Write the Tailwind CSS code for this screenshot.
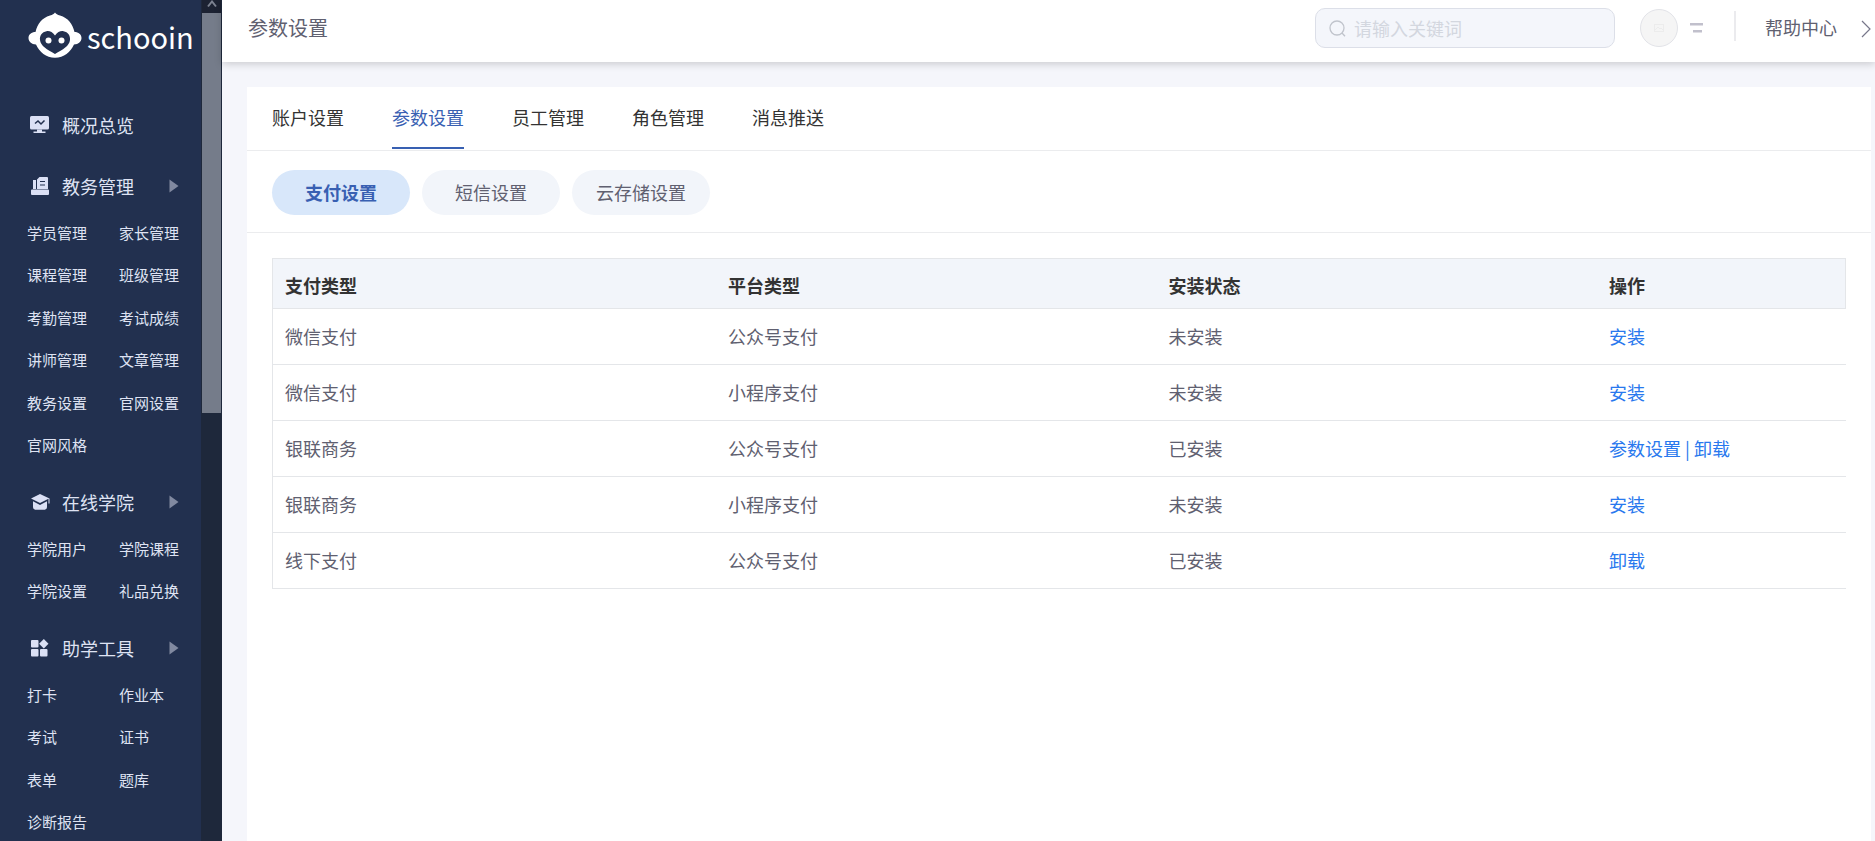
<!DOCTYPE html>
<html lang="zh-CN">
<head>
<meta charset="utf-8">
<meta name="viewport" content="width=device-width, initial-scale=1">
<title>参数设置</title>
<script src="https://cdn.jsdelivr.net/npm/@tailwindcss/browser@4"></script>
</head>
<body class="flex h-screen overflow-hidden bg-[#f5f6fb] font-['Noto_Sans_CJK_SC',sans-serif] text-lg text-[#606070]">

<aside class="flex w-[222px] shrink-0 bg-[#22304f] text-[#dfe3f3]">
  <div class="min-w-0 flex-1 overflow-hidden">
    <a href="#" class="flex h-[88px] items-start gap-[5px] pl-7 text-white">
      <svg class="mt-3 h-[46px] w-[54px] shrink-0" viewBox="0 0 54 46" aria-hidden="true">
        <path fill="#fff" d="M27 .5c1 1.600 2.500 2.200 5 3C40 6 44.500 11.500 46.500 20c4 0 7 2.500 7 6s-3 6.500-7.500 6.500C42.500 40 36 45.800 27 45.800S11.500 40 8 32.500C3.500 32.500.5 29.500.5 26s3-6 7-6C9.500 11.500 14 6 22 3.500c2.500-.8 4-1.400 5-3z"/>
        <path fill="#22304f" d="M27 23.500c2.500-3.500 5.500-4.800 8.500-4.300 4.500.7 7 4.300 6.500 8.800-.7 6-7 9.500-15 14-8-4.500-14.300-8-15-14-.5-4.500 2-8.100 6.500-8.800 3-.5 6 .8 8.500 4.300z"/>
        <circle cx="20.500" cy="28.500" r="3" fill="#fff"/><circle cx="33.500" cy="28.500" r="3" fill="#fff"/>
      </svg>
      <span class="mt-3 text-[29px] leading-[48px]">schooin</span>
    </a>
    <nav aria-label="主菜单">
      <a href="#" class="mt-3 flex h-[50px] items-center pl-[30px]">
        <svg class="mr-3 size-5" viewBox="0 0 20 20" fill="none" aria-hidden="true"><rect y="1" width="19" height="13.500" rx="1.500" fill="#dbe0f5"/><path d="M7 14.500h5v2h3.500V18h-12v-1.500H7z" fill="#dbe0f5"/><path d="M5 8.500 8 6l3 3 3.500-3.500" stroke="#22304f" stroke-width="1.500"/></svg>
        概况总览
      </a>
      <button type="button" class="mt-[11px] flex h-[50px] w-full items-center pl-[30px]">
        <svg class="mr-3 size-5" viewBox="0 0 20 20" aria-hidden="true"><path fill="#dbe0f5" d="M3 4h3v9H3zM7 3.500 9.500 1H17a1 1 0 0 1 1 1v11H7zM2 13.500h16a1 1 0 0 1 1 1V18a1 1 0 0 1-1 1H2a1 1 0 0 1-1-1v-3.500a1 1 0 0 1 1-1z"/><path stroke="#22304f" d="M10 5.500h5M10 9h5"/></svg>
        教务管理
        <svg class="ml-auto mr-[22px] h-[14px] w-[10px]" viewBox="0 0 10 14" aria-hidden="true"><path fill="#8189a0" d="M.5.5 9.500 7l-9 6.500z"/></svg>
      </button>
      <div class="grid h-[255px] grid-cols-[92px_1fr] grid-rows-6 items-center pl-[27px] text-[15px]">
        <a href="#">学员管理</a><a href="#">家长管理</a>
        <a href="#">课程管理</a><a href="#">班级管理</a>
        <a href="#">考勤管理</a><a href="#">考试成绩</a>
        <a href="#">讲师管理</a><a href="#">文章管理</a>
        <a href="#">教务设置</a><a href="#">官网设置</a>
        <a href="#">官网风格</a>
      </div>
      <button type="button" class="mt-[11px] flex h-[50px] w-full items-center pl-[30px]">
        <svg class="mr-3 size-5" viewBox="0 0 20 20" fill="#dbe0f5" aria-hidden="true"><path d="M10 2 1 6.500l9 4.500 8.500-4.300v4.800h1V6.500z"/><path d="M3 9.300 10 13l7-3.700V15c0 2-1.500 2.800-3 2.800H6c-1.500 0-3-.8-3-2.800z"/></svg>
        在线学院
        <svg class="ml-auto mr-[22px] h-[14px] w-[10px]" viewBox="0 0 10 14" aria-hidden="true"><path fill="#8189a0" d="M.5.5 9.500 7l-9 6.500z"/></svg>
      </button>
      <div class="grid h-[85px] grid-cols-[92px_1fr] grid-rows-2 items-center pl-[27px] text-[15px]">
        <a href="#">学院用户</a><a href="#">学院课程</a>
        <a href="#">学院设置</a><a href="#">礼品兑换</a>
      </div>
      <button type="button" class="mt-[11px] flex h-[50px] w-full items-center pl-[30px]">
        <svg class="mr-3 size-5" viewBox="0 0 20 20" fill="#dbe0f5" aria-hidden="true"><rect x="1" y="2" width="7.500" height="7.500" rx="1"/><rect x="1" y="11" width="7.500" height="7.500" rx="1"/><rect x="10" y="11" width="7.500" height="7.500" rx="1"/><path d="M13.800 1 18.500 5.700l-4.700 4.700-4.700-4.700z"/></svg>
        助学工具
        <svg class="ml-auto mr-[22px] h-[14px] w-[10px]" viewBox="0 0 10 14" aria-hidden="true"><path fill="#8189a0" d="M.5.5 9.500 7l-9 6.500z"/></svg>
      </button>
      <div class="grid h-[170px] grid-cols-[92px_1fr] grid-rows-4 items-center pl-[27px] text-[15px]">
        <a href="#">打卡</a><a href="#">作业本</a>
        <a href="#">考试</a><a href="#">证书</a>
        <a href="#">表单</a><a href="#">题库</a>
        <a href="#">诊断报告</a>
      </div>
    </nav>
  </div>
  <div class="flex w-[21px] shrink-0 flex-col bg-[#1e283b] px-px" aria-hidden="true">
    <div class="flex h-[13px] justify-center bg-[#1c2232]">
      <svg class="h-2 w-[10px]" viewBox="0 0 10 8" fill="none" stroke="#7c8290" stroke-width="2"><path d="m1 6.500 4-5 4 5"/></svg>
    </div>
    <div class="h-[400px] bg-[#757c8a]"></div>
  </div>
</aside>

<div class="flex min-w-0 flex-1 flex-col">
  <header class="z-10 flex h-[62px] shrink-0 items-start bg-white pl-[26px] shadow-[0_2px_8px_rgba(0,0,0,0.18)]">
    <h1 class="mt-[14px] text-xl leading-7">参数设置</h1>
    <label class="ml-auto mt-2 flex h-10 w-[300px] items-center gap-2 rounded-[10px] border border-[#dcdfe8] bg-[#f4f6fb] pl-[13px]">
      <svg class="size-[17px] shrink-0" viewBox="0 0 17 17" fill="none" stroke="#c0c4cc" stroke-width="1.300" aria-hidden="true"><circle cx="8" cy="8" r="7"/><path d="m13 13 3 3.300"/></svg>
      <input type="search" aria-label="搜索" placeholder="请输入关键词" class="w-full min-w-0 bg-transparent outline-none placeholder:text-[#d3d7df]">
    </label>
    <button type="button" aria-label="用户菜单" class="ml-[25px] mt-[9px] flex items-center gap-3">
      <span class="flex size-[38px] items-center justify-center rounded-full border border-[#e2e3e8] bg-[#f5f5f5]">
        <svg class="h-2 w-[10px]" viewBox="0 0 10 8" fill="none" stroke="#ececec"><rect x=".5" y=".5" width="9" height="7"/><path d="m1 6 3-3 2 2 1-1 2 2"/></svg>
      </span>
      <svg class="h-[10px] w-[13px]" viewBox="0 0 13 10" fill="#c1c0cc"><path d="M0 0h13v2.500H0zM3 7h9v2.500H3z"/></svg>
    </button>
    <span class="ml-[31px] mt-[11px] h-[30px] w-[2px] bg-[#ebebee]"></span>
    <a href="#" class="ml-[29px] mt-[13px] leading-7">帮助中心</a>
    <button type="button" aria-label="更多" class="ml-6 mr-1 mt-5">
      <svg class="h-[18px] w-[10px]" viewBox="0 0 10 18" fill="none" stroke="#77778a" stroke-width="1.200"><path d="m1 1 8 8-8 8"/></svg>
    </button>
  </header>

  <main class="ml-[25px] mr-1 mt-[25px] flex-1 bg-white">
    <nav aria-label="设置" class="flex h-16 gap-12 border-b border-[#ebecee] pl-[25px] text-[#333]">
      <a href="#" class="h-[62px] leading-[60px]">账户设置</a>
      <a href="#" aria-current="page" class="h-[62px] border-b-2 border-[#3860b2] leading-[60px] text-[#3860b2]">参数设置</a>
      <a href="#" class="h-[62px] leading-[60px]">员工管理</a>
      <a href="#" class="h-[62px] leading-[60px]">角色管理</a>
      <a href="#" class="h-[62px] leading-[60px]">消息推送</a>
    </nav>
    <div class="flex h-[82px] gap-3 border-b border-[#ebecee] pl-[25px] pt-[19px]">
      <button type="button" class="h-[45px] w-[138px] rounded-full bg-[#d8e7fa] pb-0.5 font-bold text-[#3860b2]">支付设置</button>
      <button type="button" class="h-[45px] w-[138px] rounded-full bg-[#f2f5fa] pb-0.5">短信设置</button>
      <button type="button" class="h-[45px] w-[138px] rounded-full bg-[#f2f5fa] pb-0.5">云存储设置</button>
    </div>
    <div class="px-[25px] pt-[25px]">
      <table class="w-full table-fixed border-collapse text-left">
        <thead>
          <tr class="h-[50px] border border-[#e4e6e9] bg-[#f2f5fa] text-[#333]">
            <th scope="col" class="w-[28.2%] px-3 pt-0.5">支付类型</th>
            <th scope="col" class="w-[28%] px-3 pt-0.5">平台类型</th>
            <th scope="col" class="w-[28%] px-3 pt-0.5">安装状态</th>
            <th scope="col" class="px-3 pt-0.5">操作</th>
          </tr>
        </thead>
        <tbody class="border-l border-[#e4e6e9]">
          <tr class="h-14 border-b border-[#e4e6e9]"><td class="px-3 pb-0.5">微信支付</td><td class="px-3 pb-0.5">公众号支付</td><td class="px-3 pb-0.5">未安装</td><td class="px-3 pb-0.5 text-[#2878ee]"><a href="#">安装</a></td></tr>
          <tr class="h-14 border-b border-[#e4e6e9]"><td class="px-3 pb-0.5">微信支付</td><td class="px-3 pb-0.5">小程序支付</td><td class="px-3 pb-0.5">未安装</td><td class="px-3 pb-0.5 text-[#2878ee]"><a href="#">安装</a></td></tr>
          <tr class="h-14 border-b border-[#e4e6e9]"><td class="px-3 pb-0.5">银联商务</td><td class="px-3 pb-0.5">公众号支付</td><td class="px-3 pb-0.5">已安装</td><td class="px-3 pb-0.5 text-[#2878ee]"><a href="#">参数设置</a> | <a href="#">卸载</a></td></tr>
          <tr class="h-14 border-b border-[#e4e6e9]"><td class="px-3 pb-0.5">银联商务</td><td class="px-3 pb-0.5">小程序支付</td><td class="px-3 pb-0.5">未安装</td><td class="px-3 pb-0.5 text-[#2878ee]"><a href="#">安装</a></td></tr>
          <tr class="h-14 border-b border-[#e4e6e9]"><td class="px-3 pb-0.5">线下支付</td><td class="px-3 pb-0.5">公众号支付</td><td class="px-3 pb-0.5">已安装</td><td class="px-3 pb-0.5 text-[#2878ee]"><a href="#">卸载</a></td></tr>
        </tbody>
      </table>
    </div>
  </main>
</div>
</body>
</html>
